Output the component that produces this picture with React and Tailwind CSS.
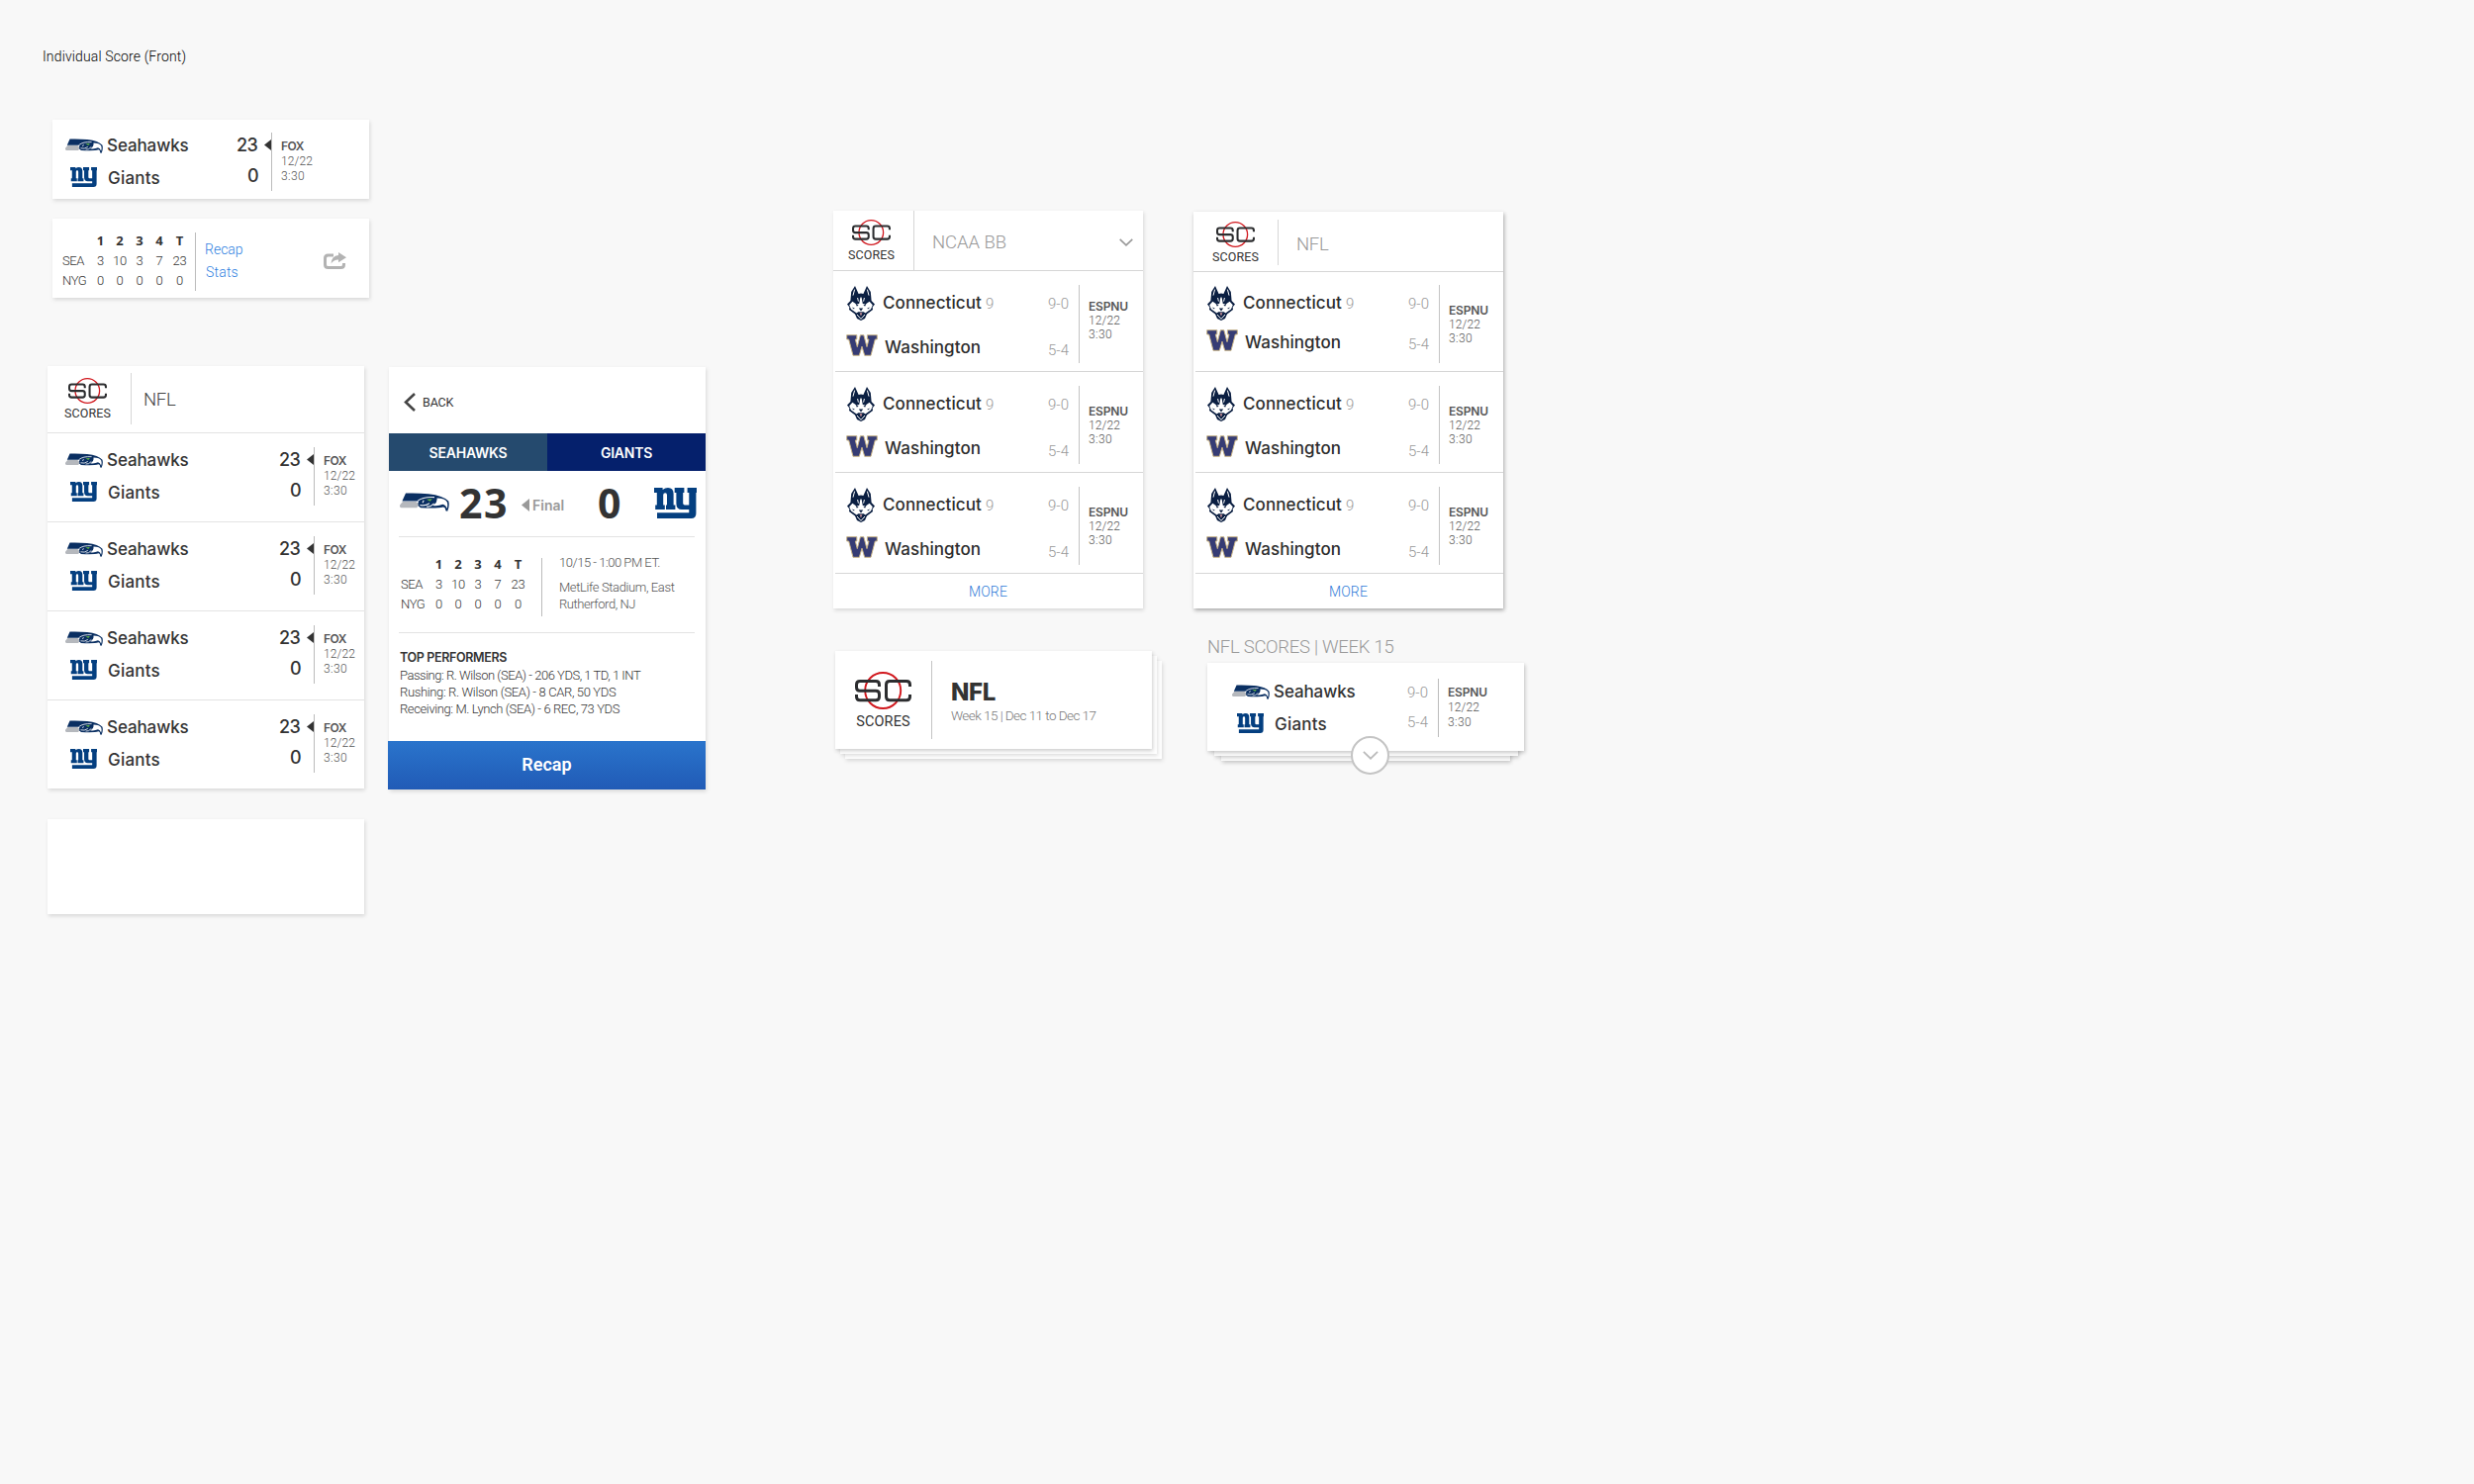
const light = "font-[Roboto,sans-serif] font-[350] whitespace-nowrap";
const medium = "font-[Inter,sans-serif] font-medium whitespace-nowrap";
const semi = "font-[Inter,sans-serif] font-semibold whitespace-nowrap";
const cardShadow = "shadow-[1px_2px_4px_rgba(0,0,0,0.13)]";

function ScLogo({ className }) {
  return (
    <svg viewBox="0 0 57 38" className={className} fill="none">
      <circle cx="28.2" cy="19" r="18" stroke="#d1171d" strokeWidth="1.9" />
      <g stroke="#2c2d2f" strokeWidth="3">
        <path d="M24.5 15V13Q24.5 9.5 21 9.5H5Q1.5 9.5 1.5 13V15.7Q1.5 19.2 5 19.2H21Q24.5 19.2 24.5 22.7V25.2Q24.5 28.7 21 28.7H5Q1.5 28.7 1.5 25.2V23" />
        <path d="M55.5 15V13Q55.5 9.5 52 9.5H35Q31.5 9.5 31.5 13V25.2Q31.5 28.7 35 28.7H52Q55.5 28.7 55.5 25.2V23" />
      </g>
    </svg>
  );
}

function SeahawksLogo({ className }) {
  return (
    <svg viewBox="0 0 50 19" preserveAspectRatio="none" className={className}>
      <path d="M6 .6Q18 .2 29 1.2Q44 2.8 49.3 8.6Q50.6 13.5 48.2 18.8L46.3 18.3Q46.6 15 44 14.4Q38 16.2 21 15.2L17.3 12.2L19 9.6L18.4 8.4H2.4Z" fill="#0a2f62" />
      <path d="M3 8.9H16.4L19 11.8L17.4 15.3H1.4Q-1.2 14 .8 11.4Z" fill="#b5b8bd" />
      <path d="M37.5 5.6Q45.8 5.8 47.8 9.6Q48.8 12.8 47.6 16Q46.3 12.2 43.4 11.8Q38.5 14 33 12.9Q38.2 10.5 37.5 5.6Z" fill="#fff" />
      <path d="M18 8.4Q23.500 3.900 35 4.600M20.400 12.400Q25.200 14 30 10.700M24.200 7.800L23 10.200M27 14Q31 14.700 34.600 10.800" fill="none" stroke="#edf0f4" strokeWidth="1.1" />
      <path d="M27 6.800L32.800 6.300L30.600 8.800Z" fill="#5fb345" />
    </svg>
  );
}

function GiantsLogo({ className }) {
  return (
    <svg viewBox="0 0 43 31" preserveAspectRatio="none" className={className} fill="#043f80">
      <path d="M0 0H8.6V2Q11 0 14 0Q19.6 0 19.6 6V17.5H21.4V22H12V17.5H13V7.2Q13 5.2 11.2 5.2Q9.2 5.2 9.2 7.2V17.5H10.8V22H1.2V17.5H2.8V5H0Z" />
      <path d="M3 25.2H35.3V22H28Q22.4 22 22.4 16V5H20.7V0H30.4V5H29.2V15.5Q29.2 17.4 31 17.4H35.3V5H33.6V0H43V5H42.4V26Q42.4 31 37.4 31H3Z" />
    </svg>
  );
}

function HuskyLogo() {
  return (
    <svg viewBox="0 0 28 35" className="h-[35px] w-[28px]">
      <path d="M8 0L11.6 8Q14 7 16.4 8L20 0L23.8 6L24.6 15L28 18.5L25.6 21.4L26 24L20 28.6L18 33L14 35L10 33L8 28.6L2 24L2.4 21.4L0 18.5L3.4 15L4.2 6Z" fill="#0b1f42" />
      <path d="M2.2 19.2L5.4 15.8L9.4 18.6L12.2 18L13.4 11.5H14.6L15.8 18L18.6 18.6L22.6 15.8L25.8 19.2L24 23.4L18.4 27.6L16.8 26.2H11.2L9.6 27.6L4 23.4Z" fill="#fff" />
      <path d="M7.600 3.600L6 9.600M20.400 3.600L22 9.600M10.600 12L11.400 15.600M17.400 12L16.600 15.600M10 29L14 33.400L18 29" fill="none" stroke="#fff" strokeWidth="1" />
      <path d="M8.4 17.4L11.6 19.8L9.8 20.4ZM19.6 17.4L16.4 19.8L18.2 20.4ZM11.8 22.6H16.2L14 25.6ZM4.6 21.4L7.6 22.6L7 23.6ZM23.4 21.4L20.4 22.6L21 23.6Z" fill="#0b1f42" />
      <path d="M12.6 27.2H15.4L14 30.6Z" fill="#c98f97" />
    </svg>
  );
}

function WashingtonLogo() {
  return (
    <svg viewBox="0 0 32 22" className="h-[22px] w-[32px]">
      <path d="M.7 .7H10.8V5H9.3L11.3 12.6L14.4 .7H17.8L21 12.6L23 5H21.4V.7H31.3V5H29.3L25 21.3H18.7L16 12.2L13.3 21.3H7L2.7 5H.7Z" fill="#363c74" stroke="#c8b487" strokeWidth="1" />
    </svg>
  );
}

function Chevron({ className }) {
  return (
    <svg viewBox="0 0 14 8" className={className} fill="none" strokeWidth="1.6">
      <path d="M.7 .8L7 6.8L13.3 .8" stroke="currentColor" />
    </svg>
  );
}

function ScoresMark({ className }) {
  return (
    <div className={"flex flex-col items-center " + className}>
      <ScLogo className="h-[26px] w-[39px]" />
      <span className="font-[Roboto,sans-serif] text-[12.5px] leading-[20px] tracking-[0.1px] text-[#333]">SCORES</span>
    </div>
  );
}

function Broadcast({ network, className, dateClass = "" }) {
  return (
    <div className={"flex flex-col text-[12px] text-[#555] " + className}>
      <span className={semi + (network === "FOX" ? " tracking-[-0.45px]" : " tracking-[-0.15px]")}>{network}</span>
      <div className={"flex flex-col " + light + " " + dateClass}>
        <span className="tracking-[0.12px]">12/22</span>
        <span className="tracking-[0.4px]">3:30</span>
      </div>
    </div>
  );
}

function NflGame({ className, sideClass, upcoming, network = "FOX" }) {
  return (
    <div className={"flex items-start " + className}>
      <div className="flex w-[43px] flex-col">
        <SeahawksLogo className="mt-[19px] h-[15px] w-[38px]" />
        <GiantsLogo className="mt-[14px] ml-[5px] h-[20px] w-[27px]" />
      </div>
      <div className={"flex flex-1 flex-col pt-[16px] text-[17px] leading-[20px] text-[#333] " + medium}>
        <span className="-ml-px tracking-[-0.1px]">Seahawks</span>
        <span className="mt-[13px] tracking-[0.2px]">Giants</span>
      </div>
      {upcoming ? (
        <div className={"mr-[10px] flex flex-col items-end pt-[17px] text-[15px] leading-[20px] text-[#999] " + light}>
          <span>9-0</span>
          <span className="mt-[10px]">5-4</span>
        </div>
      ) : (
        <>
          <div className={"mr-[6px] flex flex-col items-end pt-[16px] text-[18px] leading-[20px] tracking-[-0.7px] text-[#333] " + medium}>
            <span className="mr-[1px]">23</span>
            <span className="mt-[11px]">0</span>
          </div>
          <svg viewBox="0 0 7 11" className="mt-[20px] h-[11px] w-[7px]" fill="#333">
            <path d="M7 0V11L0 5.5Z" />
          </svg>
        </>
      )}
      <div className="mt-[13px] h-[59px] w-px bg-[#bbb]" />
      <div className={"pl-[9px] " + sideClass}>
        <Broadcast network={network} className="pt-[19px] leading-[15px]" dateClass="pt-px" />
      </div>
    </div>
  );
}

const quarters = [
  ["SEA", "3", "10", "3", "7", "23"],
  ["NYG", "0", "0", "0", "0", "0"],
];

function BoxScore({ className }) {
  return (
    <div className={"grid auto-rows-[20px] grid-cols-[29px_19px_20px_20px_20px_21px] text-center text-[13px] text-[#333] " + className}>
      <span />
      {["1", "2", "3", "4", "T"].map((h) => (
        <span key={h} className="font-['Open_Sans',sans-serif] leading-[20px] font-bold">{h}</span>
      ))}
      {quarters.map((row) =>
        row.map((v, i) => (
          <span key={row[0] + i} className={"leading-[22px] " + light + (i === 0 ? " text-left tracking-[-0.4px]" : " tracking-[-0.2px]")}>{v}</span>
        ))
      )}
    </div>
  );
}

function CollegeGame({ lineInset, tight, early, raised }) {
  return (
    <div className={"flex h-[102px] flex-col " + (raised ? "-mb-px" : "")}>
      <div className={"h-px bg-[#d6d6d6] " + (lineInset ? "ml-[2px]" : "")} />
      <div className={"flex flex-1 items-start pl-[13px] " + (raised ? "-mt-px" : "")}>
        <div className="flex w-[37px] flex-col">
          <div className="mt-[15px] ml-[1px]"><HuskyLogo /></div>
          <div className={tight ? "mt-[9px]" : "mt-[14px]"}><WashingtonLogo /></div>
        </div>
        <div className={"flex flex-1 flex-col pt-[22px] text-[17px] leading-[20px] text-[#2d2d2d] " + medium}>
          <span className="flex items-baseline tracking-[0.1px]">
            Connecticut
            <span className={"ml-[4px] text-[15px] text-[#999] " + light}>9</span>
          </span>
          <span className={"ml-[2px] tracking-[0.07px] " + (tight ? "mt-[19px]" : "mt-[24px]")}>Washington</span>
        </div>
        <div className={"mr-[10px] flex flex-col items-end pt-[23px] text-[15px] leading-[20px] text-[#999] " + light}>
          <span>9-0</span>
          <span className={tight ? "mt-[21px]" : "mt-[27px]"}>5-4</span>
        </div>
        <div className="mt-[14px] h-[79px] w-px bg-[#c4c4c4]" />
        <div className="w-[64px] pl-[9px]">
          <Broadcast network="ESPNU" className={"leading-[14px] " + (early ? "pt-[29px]" : "pt-[33px]")} />
        </div>
      </div>
    </div>
  );
}

function MoreFooter() {
  return (
    <div className="flex h-[36px] flex-col">
      <div className="ml-[2px] h-px bg-[#d6d6d6]" />
      <span className={"pt-[8px] text-center text-[14px] leading-[20px] tracking-[0.14px] text-[#2f7bd8] " + light}>MORE</span>
    </div>
  );
}

export default function App() {
  return (
    <main className="flex h-[1500px] w-[2500px] items-start overflow-hidden bg-[#f8f8f8]">
      <section className="flex w-[842px] shrink-0 flex-col items-start">
        <h1 className={"mt-[47px] ml-[43px] text-[14px] leading-[20px] tracking-[0.14px] text-black " + light}>Individual Score (Front)</h1>

        <div className={"mt-[54px] ml-[53px] h-[80px] w-[320px] bg-white " + cardShadow}>
          <NflGame className="pl-[13px]" sideClass="w-[98px]" />
        </div>

        <div className={"mt-[20px] ml-[53px] flex h-[80px] w-[320px] items-start bg-white " + cardShadow}>
          <BoxScore className="w-[144px] pt-[12px] pl-[10px]" />
          <div className="mt-[14px] h-[59px] w-px bg-[#bbb]" />
          <div className={"flex flex-1 flex-col pt-[20px] pl-[9px] text-[14px] leading-[23px] text-[#2f7fdf] " + light}>
            <span>Recap</span>
            <span className="pl-[1px] tracking-[0.2px]">Stats</span>
          </div>
          <svg viewBox="0 0 23 17" className="mt-[34px] mr-[23px] h-[17px] w-[23px]">
            <path d="M10 3H4.5Q1.5 3 1.5 6V12.5Q1.5 15.5 4.5 15.5H17.5Q20.5 15.5 20.5 12.5V11" fill="none" stroke="#b3b3b3" strokeWidth="3" />
            <path d="M15 0L23 5.3L15 10.3V7.5Q10.5 7.3 7.5 11.5Q8 3.8 15 3Z" fill="#b3b3b3" />
          </svg>
        </div>

        <div className="mt-[69px] ml-[48px] flex items-start gap-[25px]">
          <div className="flex flex-col gap-[31px]">
            <div className={"h-[427px] w-[320px] bg-white " + cardShadow}>
              <header className="flex h-[67px] items-start">
                <ScoresMark className="w-[84px] pt-[12px] pr-[3px]" />
                <div className="mt-[7px] h-[52px] w-px bg-[#d6d6d6]" />
                <span className={"pt-[24px] pl-[12px] text-[18.5px] leading-[20px] tracking-[-0.3px] text-[#444] " + light}>NFL</span>
              </header>
              {[0, 1, 2, 3].map((n) => (
                <div key={n} className="h-[90px] border-t border-[#e3e3e3] pt-px">
                  <NflGame className="pl-[18px]" sideClass="w-[50px]" />
                </div>
              ))}
            </div>
            <div className={"h-[96px] w-[320px] bg-white " + cardShadow} />
          </div>

          <div className={"mt-px flex h-[427px] w-[320px] flex-col bg-white " + cardShadow}>
            <header className="flex h-[67px] items-start pl-[15px]">
              <svg viewBox="0 0 12 19" className="mt-[26px] h-[19px] w-[12px]" fill="none" stroke="#444" strokeWidth="2.6">
                <path d="M11 1L2 9.5L11 18" />
              </svg>
              <span className="pt-[26px] pl-[7px] font-[Roboto,sans-serif] text-[12.5px] leading-[20px] tracking-[-0.16px] text-[#333]">BACK</span>
            </header>
            <div className={"grid h-[38px] grid-cols-2 text-center text-[14px] leading-[38px] text-white " + semi}>
              <span className="h-[38px] bg-[#254a6e] pt-px tracking-[-0.19px]">SEAHAWKS</span>
              <span className="h-[38px] bg-[#05206c] pt-px tracking-[-0.25px]">GIANTS</span>
            </div>
            <div className="flex h-[66px] items-start pl-[11px]">
              <SeahawksLogo className="mt-[22px] h-[19px] w-[50px]" />
              <span className="w-[63px] pt-[12px] pl-[10px] font-['Open_Sans',sans-serif] text-[41px] leading-[40px] font-bold tracking-[1.6px] text-[#333]">23</span>
              <svg viewBox="0 0 8 13" className="mt-[28px] ml-[10px] h-[13px] w-[8px]" fill="#999">
                <path d="M8 0V13L0 6.5Z" />
              </svg>
              <span className={"w-[67px] pt-[25px] pl-[3px] text-[14px] leading-[20px] text-[#999] " + semi}>Final</span>
              <span className="w-[59px] pt-[12px] pl-[2px] font-['Open_Sans',sans-serif] text-[41px] leading-[40px] font-bold text-[#333]">0</span>
              <GiantsLogo className="mt-[17px] h-[31px] w-[43px]" />
            </div>
            <div className="mr-[11px] ml-[10px] h-px bg-[#e3e3e3]" />
            <div className="flex h-[96px] items-start">
              <BoxScore className="w-[154px] pt-[17px] pl-[12px]" />
              <div className="mt-[21px] h-[59px] w-px bg-[#bbb]" />
              <div className={"flex flex-col pt-[17px] pl-[17px] text-[13px] leading-[18px] text-[#555] " + light}>
                <span className="tracking-[-0.48px]">10/15 - 1:00 PM ET.</span>
                <span className="mt-[7px] tracking-[-0.38px]">MetLife Stadium, East</span>
                <span className="-mt-px tracking-[-0.43px]">Rutherford, NJ</span>
              </div>
            </div>
            <div className="mr-[11px] ml-[10px] h-px bg-[#e3e3e3]" />
            <div className="flex flex-1 flex-col pt-[15px] pl-[11px] text-[#333]">
              <span className={"text-[12.5px] leading-[20px] tracking-[-0.35px] " + semi}>TOP PERFORMERS</span>
              <div className={"-mt-px flex flex-col text-[13px] leading-[17px] " + light}>
                <span className="tracking-[-0.48px]">Passing: R. Wilson (SEA) - 206 YDS, 1 TD, 1 INT</span>
                <span className="tracking-[-0.36px]">Rushing: R. Wilson (SEA) - 8 CAR, 50 YDS</span>
                <span className="tracking-[-0.39px]">Receiving: M. Lynch (SEA) - 6 REC, 73 YDS</span>
              </div>
            </div>
            <button className="-ml-px h-[49px] w-[321px] bg-linear-to-b from-[#2a74cc] to-[#215bb6] pb-px font-[Roboto,sans-serif] text-[18px] leading-[46px] font-semibold text-white">Recap</button>
          </div>
        </div>
      </section>

      <section className="flex w-[364px] shrink-0 flex-col items-start pt-[213px]">
        <div className={"h-[402px] w-[313px] bg-white " + cardShadow}>
          <header className="flex h-[60px] items-start">
            <ScoresMark className="w-[81px] pt-[9px] pr-[4px]" />
            <div className="h-[60px] w-px bg-[#d6d6d6]" />
            <span className={"flex-1 pt-[22px] pl-[18px] text-[18.5px] leading-[20px] tracking-[-0.07px] text-[#999] " + light}>NCAA BB</span>
            <Chevron className="mt-[28px] mr-[10px] h-[8px] w-[14px] text-[#999]" />
          </header>
          <CollegeGame early />
          <CollegeGame lineInset />
          <CollegeGame lineInset />
          <MoreFooter />
        </div>

        <div className="relative mt-[43px] ml-[2px] h-[109px] w-[330px]">
          <div className={"absolute top-[10px] left-[10px] h-[99px] w-[320px] bg-white " + cardShadow} />
          <div className={"absolute top-[5px] left-[5px] h-[99px] w-[320px] bg-white " + cardShadow} />
          <div className="relative flex h-[99px] w-[320px] items-start bg-white shadow-[1px_2px_4px_rgba(0,0,0,0.2)]">
            <div className="flex w-[97px] flex-col items-center pt-[21px]">
              <ScLogo className="h-[38px] w-[57px]" />
              <span className="mt-[3px] font-[Roboto,sans-serif] text-[14.5px] leading-[20px] tracking-[0.15px] text-[#333]">SCORES</span>
            </div>
            <div className="mt-[10px] h-[79px] w-px bg-[#c4c4c4]" />
            <div className="flex flex-col pt-[30px] pl-[19px]">
              <span className="font-[Inter,sans-serif] text-[24px] leading-[24px] font-extrabold tracking-[-0.3px] text-[#333]">NFL</span>
              <span className={"mt-px text-[13.5px] leading-[20px] tracking-[-0.55px] text-[#777] " + light}>Week 15 | Dec 11 to Dec 17</span>
            </div>
          </div>
        </div>
      </section>

      <section className="flex shrink-0 flex-col items-start pt-[214px]">
        <div className="h-[401px] w-[313px] bg-white shadow-[1px_2px_4px_rgba(0,0,0,0.32)]">
          <header className="flex h-[60px] items-start">
            <ScoresMark className="w-[85px] pt-[10px]" />
            <div className="mt-[8px] h-[46px] w-px bg-[#d6d6d6]" />
            <span className={"pt-[23px] pl-[18px] text-[18.5px] leading-[20px] tracking-[-0.3px] text-[#999] " + light}>NFL</span>
          </header>
          <CollegeGame tight raised />
          <CollegeGame lineInset />
          <CollegeGame lineInset />
          <MoreFooter />
        </div>

        <h2 className={"mt-[29px] ml-[14px] text-[18.5px] leading-[20px] tracking-[-0.28px] text-[#999] " + light}>NFL SCORES | WEEK 15</h2>

        <div className="relative mt-[6px] ml-[14px] h-[112px] w-[320px]">
          <div className="absolute top-[10px] left-[14px] h-[89px] w-[292px] bg-white shadow-[1px_2px_4px_rgba(0,0,0,0.2)]" />
          <div className="absolute top-[5px] left-[7px] h-[89px] w-[307px] bg-white shadow-[1px_2px_4px_rgba(0,0,0,0.2)]" />
          <div className="relative h-[89px] w-[320px] bg-white pt-[3px] shadow-[1px_2px_4px_rgba(0,0,0,0.22)]">
            <NflGame upcoming network="ESPNU" className="pl-[25px]" sideClass="w-[86px]" />
          </div>
          <div className="absolute top-[74px] left-[145px] flex h-[39px] w-[39px] items-center justify-center rounded-full border-2 border-[#c4c4c4] bg-white">
            <Chevron className="h-[9px] w-[16px] text-[#bbb]" />
          </div>
        </div>
      </section>
    </main>
  );
}
